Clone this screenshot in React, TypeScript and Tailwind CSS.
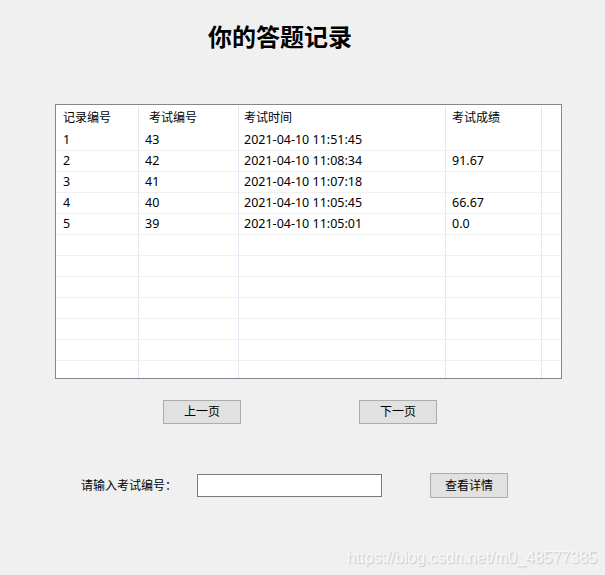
const font = { fontFamily: '"Noto Sans", "Noto Sans CJK SC", sans-serif' }

const records = [
  { id: '1', exam: '43', time: '2021-04-10 11:51:45', score: '' },
  { id: '2', exam: '42', time: '2021-04-10 11:08:34', score: '91.67' },
  { id: '3', exam: '41', time: '2021-04-10 11:07:18', score: '' },
  { id: '4', exam: '40', time: '2021-04-10 11:05:45', score: '66.67' },
  { id: '5', exam: '39', time: '2021-04-10 11:05:01', score: '0.0' },
]

const rows = [...records, ...Array.from({ length: 7 }, () => ({ id: '', exam: '', time: '', score: '' }))]

function Button({ label, className = '' }: { label: string; className?: string }) {
  return (
    <button
      type="button"
      className={`h-[24px] w-[78px] border border-[#adadad] bg-[#e1e1e1] text-[12px] text-black leading-none ${className}`}
    >
      {label}
    </button>
  )
}

export default function App() {
  return (
    <div className="relative h-[575px] w-[605px] overflow-hidden bg-[#f0f0f0] text-black" style={font}>
      {/* Title */}
      <div
        className="pl-[208px] pt-[20px] h-[104px] text-[24px] font-bold leading-[32px]"
        style={{ fontFamily: '"Noto Sans CJK SC", sans-serif' }}
      >
        你的答题记录
      </div>

      {/* Records table */}
      <div className="ml-[55px] h-[275px] w-[507px] overflow-hidden border border-[#828790] bg-white text-[12px]">
        <div className="flex h-[25px] pt-[1px]">
          <div className="w-[83px] border-r border-[#e8e8e8] pl-[7px] leading-[24px]">记录编号</div>
          <div className="w-[100px] border-r border-[#e8e8e8] pl-[10px] leading-[24px]">考试编号</div>
          <div className="w-[207px] border-r border-[#e8e8e8] pl-[5px] leading-[24px]">考试时间</div>
          <div className="w-[96px] border-r border-[#e8e8e8] pl-[6px] leading-[24px]">考试成绩</div>
          <div className="flex-1" />
        </div>
        {rows.map((r, i) => (
          <div key={i} className="flex h-[21px] border-b border-[#f0f0f0] text-[12.5px] leading-[20px]">
            <div className="w-[83px] border-r border-[#e3e9f2] pl-[7px]">{r.id}</div>
            <div className="w-[100px] border-r border-[#e3e9f2] pl-[6px]">{r.exam}</div>
            <div className="w-[207px] border-r border-[#e3e9f2] pl-[5px]">{r.time}</div>
            <div className="w-[96px] border-r border-[#e3e9f2] pl-[6px]">{r.score}</div>
            <div className="flex-1" />
          </div>
        ))}
      </div>

      {/* Paging */}
      <div className="mt-[21px] flex pl-[163px]">
        <Button label="上一页" />
        <Button label="下一页" className="ml-[118px]" />
      </div>

      {/* Lookup */}
      <div className="mt-[49px] flex items-center">
        <span className="ml-[81px] w-[116px] text-[12px]">请输入考试编号：</span>
        <input className="h-[23px] w-[185px] border border-[#7a7a7a] bg-white px-1 text-[12px] outline-none" />
        <Button label="查看详情" className="ml-[48px] h-[25px]" />
      </div>

      {/* Watermark */}
      <div
        className="absolute left-[347px] top-[546px] text-[16px] text-[#f8f8f8]"
        style={{ fontFamily: '"Liberation Sans", sans-serif', textShadow: '1px 1px 1px rgba(0,0,0,0.18)' }}
      >
        https://blog.csdn.net/m0_48577385
      </div>
    </div>
  )
}
